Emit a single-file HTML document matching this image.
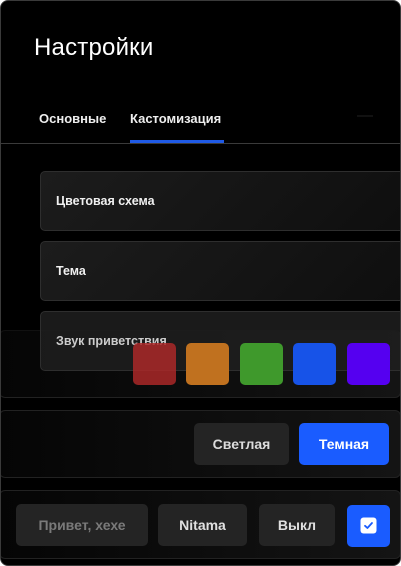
<!DOCTYPE html>
<html><head><meta charset="utf-8"><style>
*{margin:0;padding:0;box-sizing:border-box}
html,body{width:401px;height:566px;background:#fff;overflow:hidden}
body{font-family:"Liberation Sans","DejaVu Sans",sans-serif;color:#fff}
.win{position:absolute;left:0;top:0;width:401px;height:566px;background:#000;border:1px solid #3a3a3a;border-radius:8px;overflow:hidden}
.abs{position:absolute}
h1{position:absolute;left:33px;top:33px;font-size:24px;font-weight:normal;color:#fff;letter-spacing:0.2px}
.tab{position:absolute;top:110px;font-size:13px;font-weight:bold;color:#eee}
.card{position:absolute;left:39px;width:380px;height:60px;background:linear-gradient(135deg,#1c1c1c,#0e0e0e);border:1px solid #2e2e2e;border-radius:5px;font-size:12.5px;font-weight:bold;color:#f0f0f0;padding-left:15px;line-height:58px}
.panel{position:absolute;left:-2px;width:402px;height:68px;background:linear-gradient(90deg,#050505,#141414);border:1px solid #222;border-radius:6px}
.sq{position:absolute;top:342px;width:43px;height:42px;border-radius:5px}
.btn{position:absolute;height:42px;border-radius:5px;background:#242424;font-size:14px;font-weight:bold;text-align:center;line-height:42px;color:#ddd}
</style></head><body>
<div class="win">
<h1>Настройки</h1>
<div class="tab" style="left:38px">Основные</div>
<div class="tab" style="left:129px">Кастомизация</div>
<div class="abs" style="left:129px;top:139px;width:94px;height:3px;background:#1f5ae6"></div>
<div class="abs" style="left:0;top:142px;width:401px;height:1px;background:#3a3a3a"></div>
<div class="abs" style="left:356px;top:114px;width:16px;height:2px;background:#111"></div>

<div class="panel" style="top:329px;border-top-color:#111;border-left-color:#111"></div>
<div class="card" style="top:170px">Цветовая схема</div>
<div class="card" style="top:240px">Тема</div>
<div class="card" style="top:310px;line-height:58px;background:rgba(30,30,30,0.85);color:#ccc;height:60px">Звук приветствия</div>
<div class="sq" style="left:132px;background:rgba(170,40,40,0.85)"></div>
<div class="sq" style="left:185px;background:#c0711f"></div>
<div class="sq" style="left:239px;background:#3f992c"></div>
<div class="sq" style="left:292px;background:#1753e8"></div>
<div class="sq" style="left:346px;background:#5500f0"></div>

<div class="panel" style="top:409px"></div>
<div class="btn" style="left:193px;top:422px;width:95px">Светлая</div>
<div class="btn" style="left:298px;top:422px;width:90px;background:#1a5cff;color:#fff">Темная</div>

<div class="panel" style="top:489px;height:69px"></div>
<div class="btn" style="left:15px;top:503px;width:132px;color:#7a7a7a">Привет, хехе</div>
<div class="btn" style="left:157px;top:503px;width:89px;color:#e0e0e0">Nitama</div>
<div class="btn" style="left:258px;top:503px;width:76px;color:#e0e0e0">Выкл</div>
<div class="btn" style="left:346px;top:504px;width:43px;background:#1a5cff"></div>
<svg class="abs" style="left:359px;top:516px" width="17" height="17" viewBox="0 0 17 17"><rect x="0.5" y="0.5" width="16" height="16" rx="3" fill="#fff"/><path d="M5 8.8 L7.4 11 L12 6" stroke="#1a5cff" stroke-width="1.8" fill="none" stroke-linecap="round" stroke-linejoin="round"/></svg>
</div>
</body></html>
